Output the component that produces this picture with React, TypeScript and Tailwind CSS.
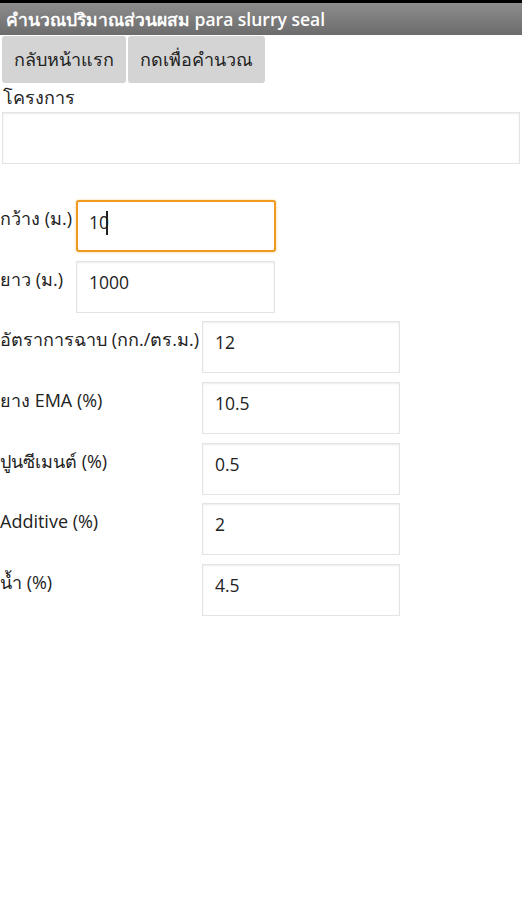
import React from "react";

const font = { fontFamily: '"Open Sans", "Noto Sans", "DejaVu Sans", sans-serif' };

function Field({ value, w, focused }: { value: string; w: string; focused?: boolean }) {
  return (
    <div
      className={
        (focused
          ? "border-2 border-[#f29a1f] rounded-[3px] shadow-[0_0_2px_rgba(240,150,30,0.6)] px-[11px] "
          : "border border-[#e4e4e4] shadow-[inset_0_1px_2px_rgba(0,0,0,0.08)] px-[12px] ") +
        w +
        " h-[52px] flex items-start pt-[7px] text-[17.5px] text-[#222] bg-white"
      }
    >
      <span>{value}</span>
      {focused && <span className="inline-block w-[1.5px] h-[24px] bg-[#222] ml-[-3px] mt-[2px]" />}
    </div>
  );
}

function Row({ label, value, labelW, focused, fieldW }: { label: string; value: string; labelW: string; focused?: boolean; fieldW: string }) {
  return (
    <div className="flex items-start">
      <div className={labelW + " text-[18px] text-[#222] pt-[5px] whitespace-nowrap"}>{label}</div>
      <Field value={value} w={fieldW} focused={focused} />
    </div>
  );
}

export default function App() {
  return (
    <div className="w-[522px] h-[900px] bg-white" style={font}>
      <div className="h-[3px] bg-black" />
      <div className="h-[32px] bg-gradient-to-b from-[#8d8d8d] to-[#6c6c6c] flex items-center px-[6px] text-white text-[17.5px] font-semibold">
        คำนวณปริมาณส่วนผสม para slurry seal
      </div>
      <div className="flex gap-[2px] px-[2px] pt-[1px]">
        <div className="h-[47px] bg-[#d4d4d4] rounded-[3px] px-[12px] flex items-center text-[18px] text-[#222]">กลับหน้าแรก</div>
        <div className="h-[47px] bg-[#d4d4d4] rounded-[3px] px-[12px] flex items-center text-[18px] text-[#222]">กดเพื่อคำนวณ</div>
      </div>
      <div className="text-[18px] text-[#222] pl-[3px] h-[29px] flex items-center">โครงการ</div>
      <div className="mx-[2px] h-[52px] border border-[#e4e4e4] shadow-[inset_0_1px_2px_rgba(0,0,0,0.08)]" />
      <div className="flex flex-col gap-[8.7px] mt-[36px]">
        <Row label="กว้าง (ม.)" value="10" labelW="w-[76px]" fieldW="w-[200px]" focused />
        <Row label="ยาว (ม.)" value="1000" labelW="w-[76px]" fieldW="w-[199px]" />
        <Row label="อัตราการฉาบ (กก./ตร.ม.)" value="12" labelW="w-[202px]" fieldW="w-[198px]" />
        <Row label="ยาง EMA (%)" value="10.5" labelW="w-[202px]" fieldW="w-[198px]" />
        <Row label="ปูนซีเมนต์ (%)" value="0.5" labelW="w-[202px]" fieldW="w-[198px]" />
        <Row label="Additive (%)" value="2" labelW="w-[202px]" fieldW="w-[198px]" />
        <Row label="น้ำ (%)" value="4.5" labelW="w-[202px]" fieldW="w-[198px]" />
      </div>
    </div>
  );
}
